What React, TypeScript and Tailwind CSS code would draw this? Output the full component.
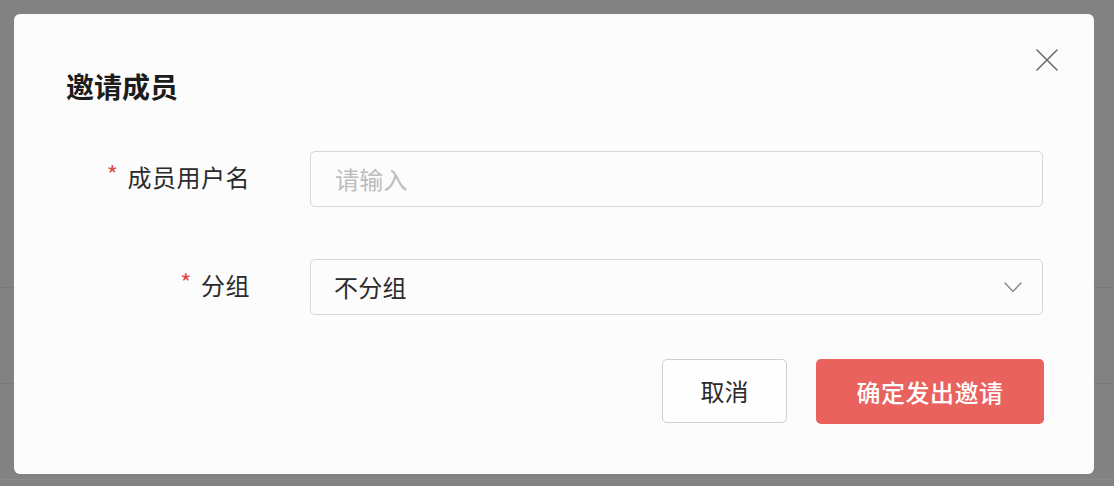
import React from "react";

export default function App() {
  return (
    <div
      className="relative w-[1114px] h-[486px] overflow-hidden bg-[#828282]"
      style={{ fontFamily: '"Noto Sans CJK SC", "Noto Sans", sans-serif' }}
    >
      {/* page content behind the overlay */}
      <div className="flex flex-col">
        <div className="h-[288px] border-b border-[#777777]" />
        <div className="h-[96px] border-b border-[#777777]" />
        <div className="h-[96px] border-b border-[#8a8a8a]" />
      </div>

      {/* dialog */}
      <div className="absolute left-[14px] top-[14px] w-[1080px] h-[460px] rounded-[6px] bg-[#fcfcfd] pt-[52px] pl-[52px] pr-[50px]">
        <button className="absolute right-[36px] top-[35px] w-[22px] h-[22px] flex items-center justify-center">
          <svg width="22" height="22" viewBox="0 0 22 22" fill="none">
            <path d="M1 1L21 21M21 1L1 21" stroke="#6b6b6b" strokeWidth="1.6" strokeLinecap="round" />
          </svg>
        </button>

        <h2 className="text-[28px] leading-[40px] font-bold text-[#1c1c1c]">邀请成员</h2>

        <div className="mt-[45px] flex flex-col gap-[52px]">
          <div className="flex items-center">
            <label className="w-[184px] flex justify-end items-center text-[24px] leading-[32px] tracking-[0.5px] text-[#2b2b2b] relative top-[-2px]">
              <span className="text-[#e04a45] text-[24px] mr-[9px] relative top-[-3px]">*</span>
              成员用户名
            </label>
            <div className="ml-[60px] w-[733px] h-[56px] rounded-[5px] border border-[#d6d6d6] bg-[#fcfcfd] flex items-center px-[24px]">
              <span className="text-[24px] tracking-[0.3px] text-[#bdbdbd]">请输入</span>
            </div>
          </div>

          <div className="flex items-center">
            <label className="w-[184px] flex justify-end items-center text-[24px] leading-[32px] tracking-[0.5px] text-[#2b2b2b] relative top-[-2px]">
              <span className="text-[#e04a45] text-[24px] mr-[9px] relative top-[-3px]">*</span>
              分组
            </label>
            <div className="ml-[60px] w-[733px] h-[56px] rounded-[5px] border border-[#d6d6d6] bg-[#fcfcfd] flex items-center justify-between pl-[23px] pr-[20px]">
              <span className="text-[24px] tracking-[0.3px] text-[#2b2b2b]">不分组</span>
              <svg width="18" height="11" viewBox="0 0 18 11" fill="none">
                <path d="M1 1L9 9.5L17 1" stroke="#8a8a8a" strokeWidth="1.4" strokeLinecap="round" strokeLinejoin="round" />
              </svg>
            </div>
          </div>
        </div>

        <div className="mt-[44px] flex justify-end gap-[29px]">
          <button className="w-[125px] h-[64px] rounded-[5px] border border-[#cfcfcf] bg-[#fefefe] text-[24px] text-[#2b2b2b]">
            取消
          </button>
          <button className="w-[228px] h-[65px] rounded-[5px] bg-[#e9625e] text-[24px] font-medium tracking-[0.5px] text-white">
            确定发出邀请
          </button>
        </div>
      </div>
    </div>
  );
}
